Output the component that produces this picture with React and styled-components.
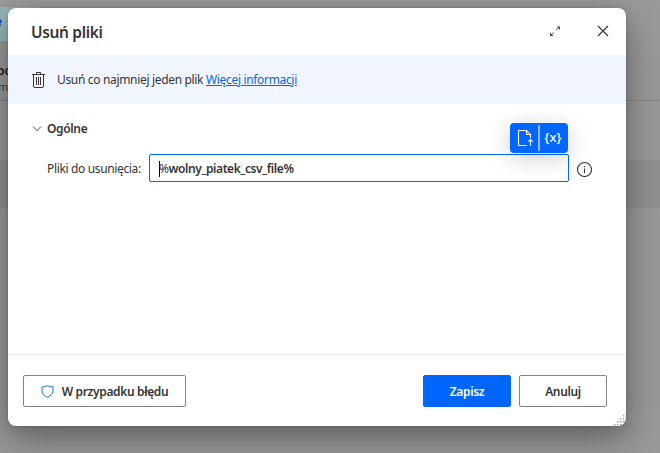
import React from 'react';
import styled, { createGlobalStyle } from 'styled-components';

const GlobalStyle = createGlobalStyle`
  * { box-sizing: border-box; }
  body {
    margin: 0;
    overflow: hidden;
    color: #363534;
    font: 12px/16px "Noto Sans", "Open Sans", sans-serif;
  }
  button { font: inherit; color: inherit; }
`;

const Stage = styled.div`
  position: relative;
  width: 660px;
  height: 453px;
  overflow: hidden;
`;

const Workspace = styled.div`
  display: flex;
  flex-direction: column;
  height: 100%;
  background: #999;
`;

const VariableRow = styled.div`
  height: 42px;
  padding-top: 7px;
`;

const VariableChip = styled.div`
  width: 39px;
  height: 34px;
  padding-top: 7px;
  background: #94b6b8;
  color: #0b3fa8;
  font-weight: 600;
  white-space: nowrap;
  text-indent: -5px;
`;

const ActionCard = styled.div`
  height: 59px;
  padding-top: 21px;
  border-bottom: 1px solid #868686;
  white-space: nowrap;
  color: #3c3c3c;
`;

const ActionTitle = styled.div`
  color: #1c1c1c;
  font-weight: 600;
  text-indent: -3px;
`;

const ActionSummary = styled.div`
  font-size: 11px;
  text-indent: -2px;
`;

const Gap = styled.div`
  height: 59px;
`;

const SelectedRow = styled.div`
  height: 49px;
  background: #909090;
  border-bottom: 1px solid #9c9c9c;
`;

const Dialog = styled.section`
  position: absolute;
  left: 8px;
  top: 8px;
  width: 618px;
  height: 418px;
  display: flex;
  flex-direction: column;
  background: #fff;
  border-radius: 8px;
  box-shadow: 0 14px 40px rgba(0, 0, 0, 0.3), 0 8px 20px rgba(0, 0, 0, 0.12), 0 0 3px rgba(0, 0, 0, 0.2);
`;

const Header = styled.header`
  display: flex;
  align-items: center;
  height: 47px;
  padding: 0 17px 0 23px;
`;

const Title = styled.h1`
  flex: 1;
  margin: 0;
  font-size: 15.5px;
  line-height: 22px;
  font-weight: 600;
  letter-spacing: -0.35px;
`;

const IconButton = styled.button`
  display: flex;
  padding: 0;
  border: 0;
  background: none;
  margin-left: ${(p) => p.$gap || 0}px;
  margin-top: -2px;
`;

const Banner = styled.div`
  display: flex;
  align-items: center;
  height: 49px;
  padding-left: 23px;
  background: #f0f5ff;
`;

const BannerText = styled.p`
  margin: 0 0 0 11px;
  padding-top: 1px;
  letter-spacing: ${(p) => p.$track}px;
  white-space: nowrap;
`;

const Link = styled.a`
  color: #0f62f0;
  text-decoration: underline;
  letter-spacing: ${(p) => p.$track}px;
`;

const Body = styled.main`
  flex: 1;
  padding: 17px 33px 0 24px;
`;

const SectionHeading = styled.div`
  display: flex;
  align-items: center;
  gap: 5px;
  height: 16px;
  font-weight: 600;
  letter-spacing: -0.35px;
`;

const Field = styled.div`
  display: flex;
  align-items: center;
  margin-top: 17px;
  padding-left: 15px;
`;

const Label = styled.label`
  width: 102px;
  padding-top: 2px;
  white-space: nowrap;
  letter-spacing: ${(p) => p.$track}px;
`;

const InputBox = styled.div`
  position: relative;
  display: flex;
  align-items: center;
  width: 420px;
  height: 28px;
  margin-right: 7px;
  padding: 2px 0 0 9px;
  border: 1px solid #0066ff;
  border-radius: 2px;
  font-weight: 600;
  letter-spacing: ${(p) => p.$track}px;
`;

const Caret = styled.span`
  width: 1px;
  height: 16px;
  margin: -1px -1px 0 0;
  background: #000;
`;

const Thin = styled.span`
  font-weight: 400;
`;

const Pickers = styled.div`
  position: absolute;
  right: 0;
  bottom: 28px;
  display: flex;
  align-items: center;
  width: 58px;
  height: 30px;
  border-radius: 4px;
  background: #0066ff;
  color: #fff;
  box-shadow: 0 5px 22px rgba(0, 0, 0, 0.2);
`;

const Picker = styled.button`
  display: flex;
  align-items: center;
  justify-content: center;
  width: 28px;
  height: 26px;
  padding: 0 0 0 2px;
  border: 0;
  background: none;
  color: #fff;
  font-size: 13px;
  font-weight: 500;
  letter-spacing: 0.1px;

  & + & {
    width: 30px;
    padding: 0 2px 2px 0;
    border-left: 2px solid #8dbaff;
  }
`;

const Info = styled.div`
  display: flex;
  padding-top: 2px;
`;

const Footer = styled.footer`
  display: flex;
  align-items: flex-start;
  gap: 8px;
  height: 72px;
  padding: 21px 19px 0 15px;
  border-top: 1px solid #e4e4e4;
`;

const Button = styled.button`
  display: flex;
  align-items: center;
  justify-content: center;
  gap: 8px;
  width: ${(p) => p.$width}px;
  height: 32px;
  margin-top: -1px;
  margin-right: ${(p) => (p.$push ? 'auto' : 0)};
  padding: 2px 0 0;
  border: 1px solid ${(p) => (p.$primary ? '#0066ff' : '#858585')};
  border-radius: 2px;
  background: ${(p) => (p.$primary ? '#0066ff' : '#fff')};
  color: ${(p) => (p.$primary ? '#fff' : '#363534')};
  font-weight: 600;
  letter-spacing: -0.35px;
  white-space: nowrap;
`;

const ResizeGrip = styled.svg`
  position: absolute;
  right: 0;
  bottom: 0;
`;

const stroke = { fill: 'none', stroke: 'currentColor' };

const ExpandIcon = () => (
  <svg width="12" height="12" viewBox="0 0 12 12" {...stroke} strokeWidth="0.9">
    <path d="M8 2h2.5v2.5M10.5 2L7.2 5M1.5 8v2.5H4M1.5 10.5l3.3-3" />
  </svg>
);

const CloseIcon = () => (
  <svg width="12" height="12" viewBox="0 0 12 12" {...stroke} strokeWidth="1.15">
    <path d="M1 1l10 10M11 1L1 11" />
  </svg>
);

const TrashIcon = () => (
  <svg width="15" height="18" viewBox="0 0 15 18" {...stroke} strokeWidth="1">
    <path d="M1 3.5h13M5.5 3V1.5h4V3M2.5 4v11q0 1.5 1.5 1.5h7q1.5 0 1.5-1.5V4M5.5 6v8M7.5 6v8M9.5 6v8" />
  </svg>
);

const ChevronIcon = () => (
  <svg width="10" height="10" viewBox="0 0 10 10" {...stroke} strokeWidth="0.9">
    <path d="M1 2.5l4 4 4-4" />
  </svg>
);

const FileUpIcon = () => (
  <svg width="18" height="18" viewBox="0 0 18 18" {...stroke} strokeWidth="1.1">
    <path d="M11 16.5H2.5v-15h8l4 4V9M10.5 1.5v4h4M14.5 17v-6.5M12.3 12.7l2.2-2.2 2.2 2.2" />
  </svg>
);

const InfoIcon = () => (
  <svg width="16" height="16" viewBox="0 0 16 16" {...stroke} strokeWidth="1.1">
    <circle cx="8.5" cy="8.5" r="7" />
    <path d="M8.5 7.5V12M8.5 5v1.2" />
  </svg>
);

const ShieldIcon = () => (
  <svg width="13" height="14" viewBox="0 0 13 14" fill="none" stroke="#1b6ef3" strokeWidth="1">
    <path d="M6.5 0.7Q4 2 1 2V6c0 3 2.4 5 5.5 6.3 3.1-1.3 5.5-3.3 5.5-6.3V2Q9 2 6.5 0.7z" />
  </svg>
);

const gripDots = [[9, 1], [6, 4], [9, 4], [3, 7], [6, 7], [9, 7], [0, 10], [3, 10], [6, 10]];

export default function App() {
  return (
    <Stage>
      <GlobalStyle />
      <Workspace>
        <VariableRow>
          <VariableChip>e</VariableChip>
        </VariableRow>
        <ActionCard>
          <ActionTitle>po</ActionTitle>
          <ActionSummary>m</ActionSummary>
        </ActionCard>
        <Gap />
        <SelectedRow />
      </Workspace>
      <Dialog>
        <Header>
          <Title>Usuń pliki</Title>
          <IconButton aria-label="Powiększ"><ExpandIcon /></IconButton>
          <IconButton aria-label="Zamknij" $gap={36}><CloseIcon /></IconButton>
        </Header>
        <Banner>
          <TrashIcon />
          <BannerText $track={-0.33}>
            Usuń co najmniej jeden plik <Link $track={-0.33}>Więcej informacji</Link>
          </BannerText>
        </Banner>
        <Body>
          <SectionHeading>
            <ChevronIcon />
            Ogólne
          </SectionHeading>
          <Field>
            <Label $track={-0.35}>Pliki do usunięcia:</Label>
            <InputBox $track={-0.43}>
              <Caret />
              <Thin>%</Thin>wolny_piatek_csv_file%
              <Pickers>
                <Picker aria-label="Wybierz plik"><FileUpIcon /></Picker>
                <Picker>{'{x}'}</Picker>
              </Pickers>
            </InputBox>
            <Info><InfoIcon /></Info>
          </Field>
        </Body>
        <Footer>
          <Button $width={163} $push><ShieldIcon />W przypadku błędu</Button>
          <Button $width={88} $primary>Zapisz</Button>
          <Button $width={88}>Anuluj</Button>
        </Footer>
        <ResizeGrip width="12" height="12" viewBox="0 0 12 12" fill="#9aa3b5">
          {gripDots.map(([x, y]) => (
            <rect key={`${x}-${y}`} x={x} y={y} width="1.5" height="1.5" />
          ))}
        </ResizeGrip>
      </Dialog>
    </Stage>
  );
}
